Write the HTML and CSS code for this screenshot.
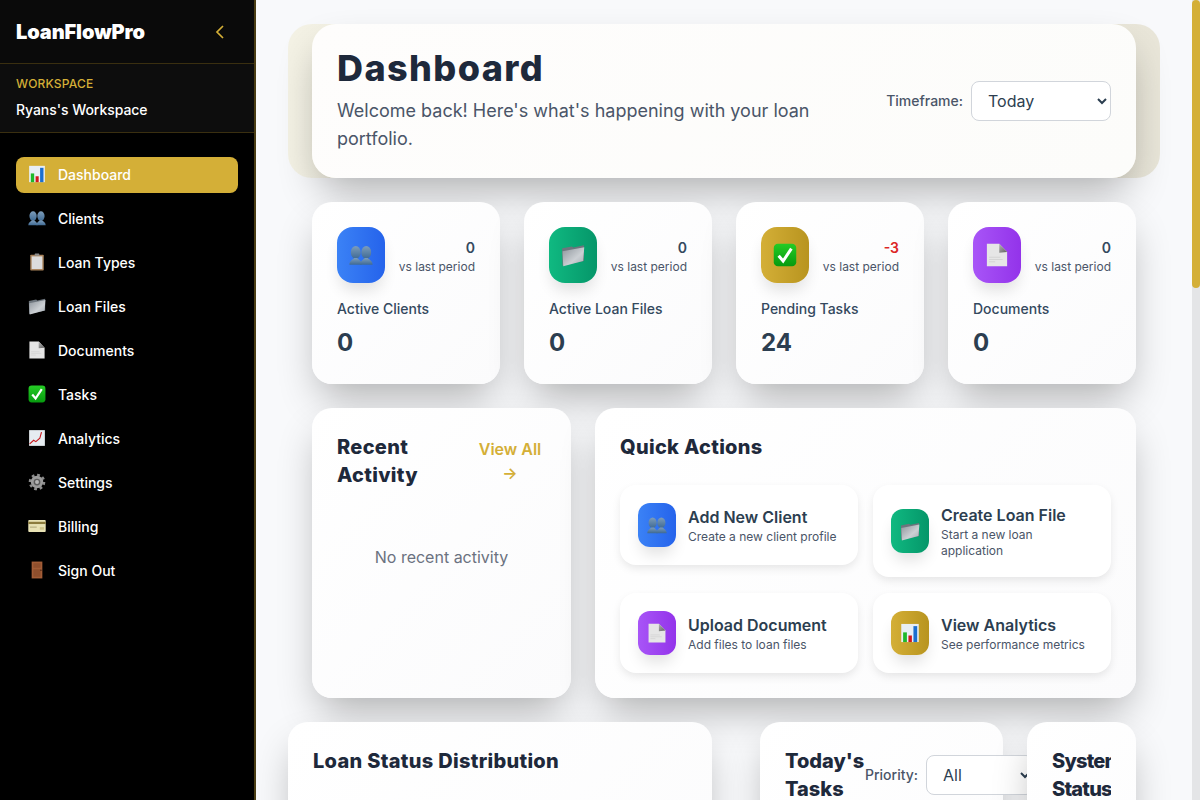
FILE: index.html
```html
<!DOCTYPE html>
<html><head><title>LoanFlowPro - Dashboard</title><meta charset="utf-8">
<link rel="stylesheet" href="styles.css">
</head>
<body>
<!-- emoji style pictures, used all over the page -->
<svg class="defs" aria-hidden="true">
    <defs>
        <linearGradient id="gBust" x1="0" y1="0" x2="0" y2="1"><stop offset="0" stop-color="#7d9dbb"/><stop offset="1" stop-color="#3f6a94"/></linearGradient>
        <linearGradient id="gFolder" x1="0" y1="0" x2="1" y2="1"><stop offset="0" stop-color="#8d949b"/><stop offset=".6" stop-color="#ccd0d4"/><stop offset="1" stop-color="#a4abb1"/></linearGradient>
        <linearGradient id="gCheck" x1="0" y1="0" x2="0" y2="1"><stop offset="0" stop-color="#25cc25"/><stop offset="1" stop-color="#079a0f"/></linearGradient>
        <linearGradient id="gFold" x1="0" y1="0" x2="1" y2="1"><stop offset="0" stop-color="#b5b5b5"/><stop offset="1" stop-color="#5f5f5f"/></linearGradient>
    </defs>
    <symbol id="e-chart" viewBox="0 0 64 64">
        <rect x="4" y="3" width="56" height="58" fill="#e8eef4"/>
        <rect x="10" y="30" width="12" height="31" fill="#1eb82a"/>
        <rect x="27" y="40" width="11" height="21" fill="#d2171c"/>
        <rect x="43" y="10" width="12" height="51" fill="#1c6ecf"/>
    </symbol>
    <symbol id="e-busts" viewBox="0 0 64 64">
        <g fill="url(#gBust)">
            <ellipse cx="18" cy="25" rx="13" ry="17"/>
            <path d="M1 58c0-10 8-13 13-18h8c5 5 12 8 12 18z"/>
            <ellipse cx="46" cy="25" rx="13" ry="17"/>
            <path d="M30 58c0-10 7-13 12-18h8c5 5 13 8 13 18z"/>
        </g>
    </symbol>
    <symbol id="e-clip" viewBox="0 0 64 64">
        <rect x="8" y="6" width="48" height="56" rx="3" fill="#a9835b"/>
        <rect x="13" y="12" width="38" height="45" fill="#dcdcdc"/>
        <rect x="24" y="2" width="16" height="8" rx="2" fill="#8c8c8c"/>
    </symbol>
    <symbol id="e-folder" viewBox="0 0 64 64">
        <path d="M3 14l26-5 4 3 28-6v42L4 60z" fill="#6d757d"/>
        <path d="M4 22l58-11-3 37L6 62z" fill="url(#gFolder)"/>
    </symbol>
    <symbol id="e-page" viewBox="0 0 64 64">
        <path d="M5 2h33l21 22v38H5z" fill="#e6e6e6"/>
        <path d="M38 2l21 22-21 2z" fill="url(#gFold)"/>
        <path d="M11 38h30M11 44h36M11 50h16" stroke="#cfcfcf" stroke-width="2"/>
    </symbol>
    <symbol id="e-check" viewBox="0 0 64 64">
        <rect x="2" y="2" width="60" height="60" rx="11" fill="url(#gCheck)"/>
        <path d="M15 34l12 14 22-33" fill="none" stroke="#fff" stroke-width="8"/>
    </symbol>
    <symbol id="e-trend" viewBox="0 0 64 64">
        <rect x="4" y="4" width="56" height="56" fill="#e6ecf1"/>
        <path d="M6 53l14-13 8 5 14-12 6-22" fill="none" stroke="#c8171c" stroke-width="4"/>
    </symbol>
    <symbol id="e-gear" viewBox="0 0 64 64">
        <circle cx="32" cy="32" r="25" fill="none" stroke="#8c8c8c" stroke-width="9" stroke-dasharray="9.8 9.8"/>
        <circle cx="32" cy="32" r="22" fill="#9a9a9a"/>
        <circle cx="32" cy="32" r="12" fill="#5a5a5a"/>
        <circle cx="32" cy="32" r="7" fill="#b5b5b5"/>
    </symbol>
    <symbol id="e-card" viewBox="0 0 64 64">
        <rect x="1" y="11" width="62" height="42" rx="3" fill="#e8e2b4"/>
        <rect x="1" y="17" width="62" height="8" fill="#8c7c3d"/>
        <rect x="7" y="34" width="24" height="4" fill="#b5ad7d"/>
        <rect x="42" y="36" width="15" height="9" fill="#cfc48a"/>
    </symbol>
    <symbol id="e-door" viewBox="0 0 64 64">
        <rect x="13" y="2" width="38" height="60" fill="#a25c36"/>
        <path d="M19 8h26v16H19zM19 29h26v27H19z" fill="#8f4f2d"/>
        <circle cx="46" cy="33" r="2.5" fill="#3e2010"/>
    </symbol>
</svg>

<div class="app">
    <aside class="sidebar">
        <div class="brand">
            <span class="logo">LoanFlowPro</span>
            <svg class="collapse" viewBox="0 0 10 14"><path d="M8 1L2 7l6 6" fill="none" stroke="#d4af37" stroke-width="1.7"/></svg>
        </div>
        <div class="workspace">
            <div class="wsLabel">WORKSPACE</div>
            <div class="wsName">Ryans's Workspace</div>
        </div>
        <nav class="menu">
            <a class="menuItem active"><svg class="emoji"><use href="#e-chart"/></svg>Dashboard</a>
            <a class="menuItem"><svg class="emoji"><use href="#e-busts"/></svg>Clients</a>
            <a class="menuItem"><svg class="emoji"><use href="#e-clip"/></svg>Loan Types</a>
            <a class="menuItem"><svg class="emoji"><use href="#e-folder"/></svg>Loan Files</a>
            <a class="menuItem"><svg class="emoji"><use href="#e-page"/></svg>Documents</a>
            <a class="menuItem"><svg class="emoji"><use href="#e-check"/></svg>Tasks</a>
            <a class="menuItem"><svg class="emoji"><use href="#e-trend"/></svg>Analytics</a>
            <a class="menuItem"><svg class="emoji"><use href="#e-gear"/></svg>Settings</a>
            <a class="menuItem"><svg class="emoji"><use href="#e-card"/></svg>Billing</a>
            <a class="menuItem"><svg class="emoji"><use href="#e-door"/></svg>Sign Out</a>
        </nav>
    </aside>

    <main class="content">
        <div class="headerBack">
            <header class="header">
                <div class="headerText">
                    <h1>Dashboard</h1>
                    <p>Welcome back! Here's what's happening with your loan portfolio.</p>
                </div>
                <div class="filter">
                    <label>Timeframe:</label>
                    <select class="selectBox timeframe"><option>Today</option><option>This Week</option><option>This Month</option></select>
                </div>
            </header>
        </div>

        <section class="stats">
            <div class="card stat">
                <div class="statTop">
                    <div class="tile blue"><svg class="emoji big"><use href="#e-busts"/></svg></div>
                    <div class="trend"><b>0</b><span>vs last period</span></div>
                </div>
                <div class="statLabel">Active Clients</div>
                <div class="statValue">0</div>
            </div>
            <div class="card stat">
                <div class="statTop">
                    <div class="tile green"><svg class="emoji big"><use href="#e-folder"/></svg></div>
                    <div class="trend"><b>0</b><span>vs last period</span></div>
                </div>
                <div class="statLabel">Active Loan Files</div>
                <div class="statValue">0</div>
            </div>
            <div class="card stat">
                <div class="statTop">
                    <div class="tile gold"><svg class="emoji big"><use href="#e-check"/></svg></div>
                    <div class="trend"><b class="down">-3</b><span>vs last period</span></div>
                </div>
                <div class="statLabel">Pending Tasks</div>
                <div class="statValue">24</div>
            </div>
            <div class="card stat">
                <div class="statTop">
                    <div class="tile purple"><svg class="emoji big"><use href="#e-page"/></svg></div>
                    <div class="trend"><b>0</b><span>vs last period</span></div>
                </div>
                <div class="statLabel">Documents</div>
                <div class="statValue">0</div>
            </div>
        </section>

        <section class="middle">
            <div class="card panel">
                <div class="panelHead">
                    <h2 class="recentTitle">Recent Activity</h2>
                    <a class="viewAll">View All →</a>
                </div>
                <p class="empty">No recent activity</p>
            </div>
            <div class="card panel">
                <h2>Quick Actions</h2>
                <div class="actions">
                    <div class="action">
                        <div class="tile small blue"><svg class="emoji mid"><use href="#e-busts"/></svg></div>
                        <div><h3>Add New Client</h3><p>Create a new client profile</p></div>
                    </div>
                    <div class="action">
                        <div class="tile small green"><svg class="emoji mid"><use href="#e-folder"/></svg></div>
                        <div><h3>Create Loan File</h3><p>Start a new loan application</p></div>
                    </div>
                    <div class="action">
                        <div class="tile small purple"><svg class="emoji mid"><use href="#e-page"/></svg></div>
                        <div><h3>Upload Document</h3><p>Add files to loan files</p></div>
                    </div>
                    <div class="action">
                        <div class="tile small gold"><svg class="emoji mid"><use href="#e-chart"/></svg></div>
                        <div><h3>View Analytics</h3><p>See performance metrics</p></div>
                    </div>
                </div>
            </div>
        </section>

        <section class="bottom">
            <div class="card panel">
                <h2>Loan Status Distribution</h2>
            </div>
            <div class="card panel tasksCard">
                <div class="tasksHead">
                    <h2 class="tasksTitle">Today's Tasks</h2>
                    <div class="filter priority">
                        <label>Priority:</label>
                        <select class="selectBox prioritySel"><option>All</option><option>High</option><option>Low</option></select>
                    </div>
                </div>
            </div>
            <div class="card panel systemCard">
                <h2 class="systemTitle">System Status</h2>
            </div>
        </section>
    </main>

    <div class="scrollTrack"><div class="scrollThumb"></div></div>
</div>
</body>
</html>
```

FILE: styles.css
```css
* {box-sizing: border-box;}
html, body {height: 100%;}
body {margin: 0; overflow: hidden; font-family: "Inter", "Liberation Sans", sans-serif; color: #2c3e50;}
h1, h2, h3, p {margin: 0;}
.defs {position: absolute; width: 0; height: 0;}
.app {display: flex; height: 100vh;}

/* sidebar */
.sidebar {width: 256px; flex: none; background: #000; border-right: 2px solid #4a3d14; color: #fff;}
.brand {height: 64px; display: flex; align-items: center; justify-content: space-between; padding: 0 29px 0 16px; background: #0a0a0a; border-bottom: 1px solid #3a2f10;}
.logo {font-size: 20px; font-weight: 900; letter-spacing: -0.1px;}
.collapse {width: 10px; height: 14px;}
.workspace {height: 69px; padding: 12px 16px; background: #0d0d0d; border-bottom: 1px solid #3a2f10;}
.wsLabel {font-size: 12px; line-height: 16px; font-weight: 500; color: #d4af37; letter-spacing: 0.2px;}
.wsName {font-size: 14px; line-height: 20px; font-weight: 500; margin-top: 8px; letter-spacing: -0.05px;}
.menu {padding: 24px 16px; display: flex; flex-direction: column; gap: 8px;}
.menuItem {height: 36px; display: flex; align-items: center; gap: 12px; padding: 0 12px 2px; border-radius: 8px; font-size: 14px; font-weight: 500; color: #fff;}
.menuItem.active {background: #d4af37;}
.emoji {width: 18px; height: 18px; flex: none;}
.emoji.big {width: 24px; height: 24px;}
.emoji.mid {width: 20px; height: 20px;}

/* main part */
.content {flex: 1; height: 100vh; overflow: hidden; padding: 24px 32px; background: #f8f9fb;}
.scrollTrack {width: 8px; flex: none; background: #e4e5e7;}
.scrollThumb {height: 288px; background: #d4af37; border-radius: 4px;}

.headerBack {padding: 0 24px; border-radius: 24px; background: linear-gradient(90deg, #f4f2e5, #e9e6d9); margin-bottom: 24px;}
.header {height: 154px; padding: 25px; display: flex; align-items: center; justify-content: space-between; gap: 24px; background: linear-gradient(135deg, #fefdfc, #fcfcfa); border-radius: 24px; box-shadow: 0 20px 40px -8px rgba(0,0,0,.3);}
.headerText {width: 490px;}
h1 {font-size: 36px; line-height: 38px; font-weight: 800; color: #1e293b; margin-bottom: 10px; letter-spacing: 1.4px;}
.headerText p {font-size: 18px; line-height: 28px; color: #4a5568;}
.filter {display: flex; align-items: center; gap: 8px; flex: none;}
.filter label {font-size: 14px; font-weight: 500; color: #4a5568; padding-bottom: 1px;}
.selectBox {height: 40px; padding: 0 12px; background: #fff; border: 1px solid #d1d5db; border-radius: 8px; font-family: inherit; font-size: 16px; color: #2c3e50;}
.timeframe {width: 140px;}

.card {background: linear-gradient(135deg, #fff, #fbfbfc); border-radius: 20px; box-shadow: 0 20px 40px -8px rgba(0,0,0,.3);}

.stats {display: grid; grid-template-columns: repeat(4, 188px); gap: 24px; padding: 0 24px; margin-bottom: 24px;}
.stat {height: 182px; padding: 25px;}
.statTop {display: flex; align-items: center; justify-content: space-between; margin-bottom: 16px;}
.tile {width: 48px; height: 56px; flex: none; display: flex; align-items: center; justify-content: center; border-radius: 16px; box-shadow: 0 10px 15px -3px rgba(0,0,0,.12);}
.tile.small {width: 38px; height: 44px; border-radius: 12px;}
.blue {background: linear-gradient(90deg, #3b82f6, #2563eb);}
.green {background: linear-gradient(90deg, #10b981, #059669);}
.gold {background: linear-gradient(90deg, #d4af37, #b8941f);}
.purple {background: linear-gradient(90deg, #a855f7, #9333ea);}
.trend {text-align: right; margin-top: 4px;}
.trend b {display: block; font-size: 14px; line-height: 20px; font-weight: 600; color: #34495e;}
.trend b.down {color: #dc2626;}
.trend span {display: block; font-size: 12px; line-height: 18px; color: #4a5568;}
.statLabel {font-size: 14px; line-height: 20px; font-weight: 500; color: #34495e; margin-bottom: 8px;}
.statValue {font-size: 24px; line-height: 32px; font-weight: 700;}

.middle {display: grid; grid-template-columns: 259px 541px; gap: 24px; padding: 0 24px; margin-bottom: 24px;}
.panel {padding: 25px; min-height: 290px;}
h2 {font-size: 20px; line-height: 28px; font-weight: 800; color: #1e293b; letter-spacing: 0.3px;}
.panelHead {display: flex; justify-content: space-between; align-items: flex-start;}
.recentTitle {width: 120px;}
.viewAll {width: 72px; font-size: 16px; line-height: 24px; font-weight: 600; color: #d4af37; text-align: center; margin-top: 4px;}
.empty {margin-top: 56px; text-align: center; font-size: 16px; line-height: 24px; color: #6b7280;}
.actions {display: grid; grid-template-columns: 238px 238px; gap: 16px 15px; align-items: start; margin-top: 24px;}
.action {display: flex; align-items: center; gap: 12px; padding: 18px; background: #fff; border-radius: 16px; box-shadow: 0 4px 10px -1px rgba(0,0,0,.1);}
.action h3 {font-size: 16px; line-height: 24px; font-weight: 600;}
.action p {font-size: 12px; line-height: 16px; color: #4a5568;}

/* this row overflows its place, the select goes under the next card */
.bottom {display: grid; grid-template-columns: 424px 267px 133px; column-gap: 24px;}
.tasksCard {margin-left: 24px;}
.systemCard {margin-right: 24px;}
.tasksHead {display: flex; align-items: flex-start;}
.tasksTitle {width: 80px; flex: none; letter-spacing: 0;}
.priority {margin-top: 8px;}
.prioritySel {width: 108px; flex: none;}
.systemTitle {overflow: hidden; width: 59px; letter-spacing: -0.8px;}
```
